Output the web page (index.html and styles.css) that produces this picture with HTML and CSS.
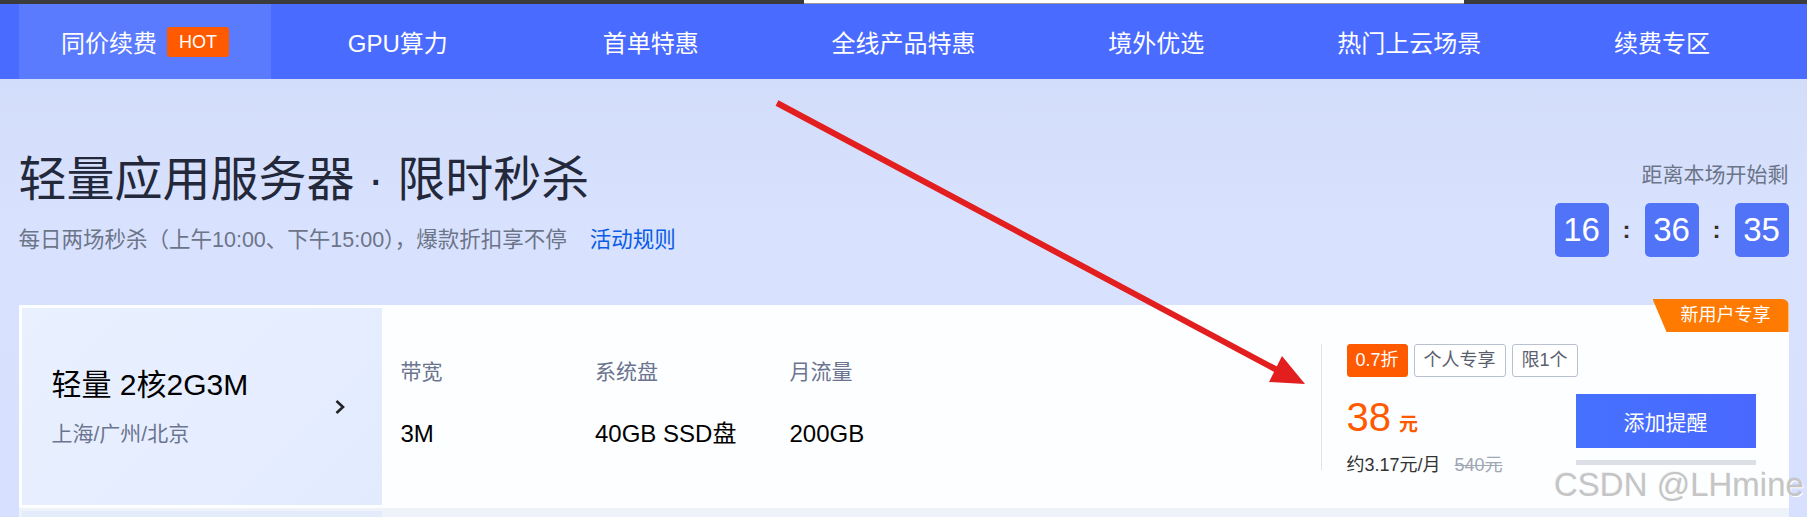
FILE: index.html
```html
<!DOCTYPE html>
<html lang="zh-CN">
<head>
    <meta charset="UTF-8">
    <meta name="viewport" content="width=device-width, initial-scale=1.0">
    <title>轻量应用服务器 · 限时秒杀</title>
    <link rel="stylesheet" href="styles.css">
</head>
<body>

    <div class="topbar">
        <div class="topbar-popup"></div>
    </div>

    <nav class="nav">
        <div class="nav-inner">
            <a class="nav-item active">同价续费 <span class="hot">HOT</span></a>
            <a class="nav-item">GPU算力</a>
            <a class="nav-item">首单特惠</a>
            <a class="nav-item">全线产品特惠</a>
            <a class="nav-item">境外优选</a>
            <a class="nav-item">热门上云场景</a>
            <a class="nav-item">续费专区</a>
        </div>
    </nav>

    <main class="page">
        <section class="hero">
            <div class="hero-text">
                <h1>轻量应用服务器 · 限时秒杀</h1>
                <p class="sub">每日两场秒杀（上午10:00、下午15:00），爆款折扣享不停<a class="rules">活动规则</a></p>
            </div>
            <div class="countdown">
                <div class="countdown-label">距离本场开始剩</div>
                <div class="countdown-clock">
                    <span class="cd-box">16</span>
                    <span class="cd-sep">:</span>
                    <span class="cd-box">36</span>
                    <span class="cd-sep">:</span>
                    <span class="cd-box">35</span>
                </div>
            </div>
        </section>

        <div class="card">
            <span class="new-badge">新用户专享</span>

            <div class="card-side">
                <div>
                    <div class="product-name">轻量 2核2G3M</div>
                    <div class="product-region">上海/广州/北京</div>
                </div>
                <svg class="chevron" width="12" height="16" viewBox="0 0 12 16">
                    <path d="M2.5 2 L9 8 L2.5 14" fill="none" stroke="#222" stroke-width="2.6"/>
                </svg>
            </div>

            <div class="specs">
                <div class="spec">
                    <div class="spec-label">带宽</div>
                    <div class="spec-value">3M</div>
                </div>
                <div class="spec">
                    <div class="spec-label">系统盘</div>
                    <div class="spec-value">40GB SSD盘</div>
                </div>
                <div class="spec">
                    <div class="spec-label">月流量</div>
                    <div class="spec-value">200GB</div>
                </div>
            </div>

            <div class="buy">
                <div class="tags">
                    <span class="tag tag-hot">0.7折</span>
                    <span class="tag">个人专享</span>
                    <span class="tag">限1个</span>
                </div>
                <div class="buy-row">
                    <div class="price-col">
                        <div class="price"><span class="price-num">38</span><span class="price-unit">元</span></div>
                        <div class="monthly">约3.17元/月<span class="old-price">540元</span></div>
                    </div>
                    <div class="btn-col">
                        <button class="btn">添加提醒</button>
                        <div class="stock-bar"></div>
                    </div>
                </div>
            </div>
        </div>

        <div class="card card-next">
            <div class="card-side"></div>
        </div>
    </main>

    <svg class="annotation" width="1807" height="517" viewBox="0 0 1807 517">
        <line x1="777" y1="103" x2="1277" y2="370" stroke="#e31e1e" stroke-width="6"/>
        <polygon points="1282,356 1269,382 1305,384" fill="#e31e1e"/>
    </svg>

    <div class="watermark">CSDN @LHmine</div>

</body>
</html>
```

FILE: styles.css
```css
html, body {
    margin: 0;
    height: 517px;
    overflow: hidden;
}

body {
    font-family: 'Liberation Sans', 'Noto Sans CJK SC', sans-serif;
    background: linear-gradient(180deg, #cfdaf8 0, #d8e2fe 220px, #d7e0fe 100%);
    position: relative;
}

.topbar {
    height: 4px;
    background-color: #3b3b3b;
    display: flex;
}

.topbar-popup {
    margin-left: 804px;
    width: 660px;
    height: 3px;
    background: #ffffff;
    border-bottom: 1px solid #9a9a9a;
}

.nav {
    height: 75px;
    background-color: #4a6bff;
}

.nav-inner {
    width: 1770px;
    height: 100%;
    margin: 0 auto;
    display: flex;
}

.nav-item {
    flex: 1;
    display: flex;
    align-items: center;
    justify-content: center;
    color: #ffffff;
    font-size: 24px;
    cursor: pointer;
}

.nav-item.active {
    background-color: #5b7bff;
}

.hot {
    margin-left: 10px;
    width: 62px;
    height: 30px;
    line-height: 30px;
    text-align: center;
    background-color: #ff5a00;
    border-radius: 3px;
    font-size: 18px;
}

.page {
    width: 1770px;
    margin: 0 auto;
}

.hero {
    display: flex;
    justify-content: space-between;
    align-items: flex-start;
    padding-top: 69px;
    margin-bottom: 48px;
}

h1 {
    margin: 0;
    font-size: 48px;
    line-height: 64px;
    font-weight: 400;
    color: #23283a;
}

.sub {
    margin: 13px 0 0;
    font-size: 21.5px;
    line-height: 30px;
    color: #6c7488;
}

.rules {
    margin-left: 23px;
    color: #0a5ce6;
    cursor: pointer;
}

.countdown {
    padding-top: 12px;
}

.countdown-label {
    text-align: right;
    font-size: 21px;
    line-height: 30px;
    color: #6c7488;
}

.countdown-clock {
    margin-top: 13px;
    display: flex;
    align-items: center;
}

.cd-box {
    width: 54px;
    height: 54px;
    display: flex;
    align-items: center;
    justify-content: center;
    background-color: #5073f7;
    border-radius: 5px;
    color: #ffffff;
    font-size: 33px;
}

.cd-sep {
    width: 36px;
    text-align: center;
    font-size: 24px;
    font-weight: bold;
    color: #3a2e28;
}

.card {
    position: relative;
    height: 203px;
    box-sizing: border-box;
    padding: 3px;
    display: flex;
    background-color: #fdfeff;
}

.card-side {
    width: 360px;
    box-sizing: border-box;
    display: flex;
    align-items: center;
    justify-content: space-between;
    padding: 0 36px 0 30px;
    background: linear-gradient(135deg, #e9f1ff 0%, #e5edff 60%, #e2ebfe 100%);
}

.product-name {
    font-size: 30px;
    line-height: 40px;
    color: #000000;
}

.product-region {
    margin-top: 14px;
    font-size: 21px;
    line-height: 30px;
    color: #6c7590;
}

.specs {
    flex: 1;
    display: flex;
    align-items: center;
    padding: 0 0 8px 19px;
}

.spec {
    width: 194.5px;
}

.spec-label {
    font-size: 21px;
    line-height: 30px;
    color: #6c7590;
}

.spec-value {
    margin-top: 32px;
    font-size: 24px;
    line-height: 30px;
    color: #000000;
}

.buy {
    align-self: center;
    height: 126px;
    box-sizing: border-box;
    width: 435px;
    margin-right: 30px;
    padding-left: 25px;
    border-left: 1px solid #dfe3ec;
}

.tags {
    display: flex;
    gap: 6px;
}

.tag {
    height: 33px;
    box-sizing: border-box;
    line-height: 31px;
    padding: 0 9px;
    font-size: 18px;
    color: #5a5f6e;
    border: 1px solid #b9c0cf;
    border-radius: 3px;
    background: #ffffff;
}

.tag-hot {
    padding: 0 8px;
    color: #ffffff;
    background-color: #ff5a00;
    border-color: #ff5a00;
}

.buy-row {
    margin-top: 17px;
    display: flex;
}

.price-col {
    width: 229px;
}

.price {
    line-height: 46px;
    color: #ff5a00;
}

.price-num {
    font-size: 40px;
}

.price-unit {
    margin-left: 8px;
    font-size: 19px;
    font-weight: bold;
}

.monthly {
    margin-top: 4px;
    font-size: 18px;
    line-height: 24px;
    color: #333333;
}

.old-price {
    margin-left: 14px;
    color: #a0a6b4;
    text-decoration: line-through;
}

.btn-col {
    width: 180px;
}

.btn {
    display: block;
    width: 180px;
    height: 54px;
    border: none;
    background: linear-gradient(90deg, #4571ff, #4a68ff);
    color: #ffffff;
    font-family: inherit;
    font-size: 21px;
    cursor: pointer;
}

.stock-bar {
    margin-top: 12px;
    height: 5px;
    background-color: #dcdfe6;
}

.new-badge {
    position: absolute;
    top: -6px;
    right: 0;
    height: 33px;
    line-height: 33px;
    padding: 0 18px 0 28px;
    background-color: #ff7a00;
    border-radius: 0 7px 0 0;
    clip-path: polygon(0 0, 100% 0, 100% 100%, 14px 100%);
    color: #ffffff;
    font-size: 18px;
}

.card-next {
    height: 40px;
    background-color: #eef2f9;
}

.card-next .card-side {
    background: #e4ecfb;
}

.annotation {
    position: absolute;
    left: 0;
    top: 0;
    pointer-events: none;
}

.watermark {
    position: absolute;
    left: 1554px;
    top: 468px;
    font-size: 33px;
    line-height: 33px;
    color: #c5c5c5;
    text-shadow: 1px 1px 0 #ffffff, -1px -1px 0 rgba(0, 0, 0, 0.06);
    white-space: nowrap;
}
```
